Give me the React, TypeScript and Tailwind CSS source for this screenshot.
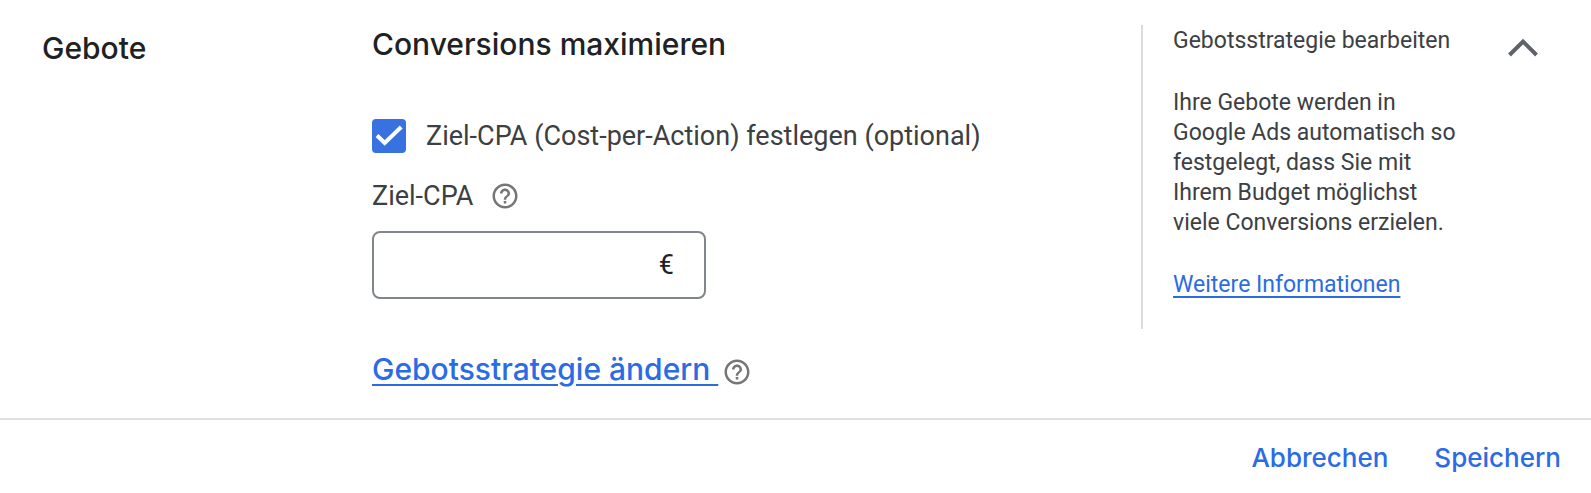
import React, { useState } from 'react';

const HelpIcon: React.FC = () => (
    <svg viewBox="0 0 24 24" className="h-[30px] w-[30px] fill-[#757575]" aria-hidden="true">
        <path d="M11 18h2v-2h-2v2zm1-16C6.48 2 2 6.48 2 12s4.48 10 10 10 10-4.48 10-10S17.52 2 12 2zm0 18c-4.41 0-8-3.59-8-8s3.59-8 8-8 8 3.59 8 8-3.59 8-8 8zm0-14c-2.21 0-4 1.79-4 4h2c0-1.1.9-2 2-2s2 .9 2 2c0 2-3 1.75-3 5h2c0-2.25 3-2.5 3-5 0-2.21-1.79-4-4-4z" />
    </svg>
);

export default function App() {
    const [useTarget, setUseTarget] = useState(true);
    const [targetCpa, setTargetCpa] = useState('');

    return (
        <div className="bg-white font-['Roboto',sans-serif] text-[#3c4043]">
            <section className="flex items-start border-b-2 border-[#e0e0e0] pt-6 pr-[38px] pb-[29px] pl-[42px]">
                <h2 className="w-[330px] shrink-0 pt-1 font-['Inter',sans-serif] text-[30px] leading-[40px] font-medium text-[#202124]">
                    Gebote
                </h2>

                {/* Bid strategy form */}
                <div className="min-w-0 flex-1">
                    <h3 className="font-['Inter',sans-serif] text-[30px] leading-[40px] font-medium text-[#202124]">
                        Conversions maximieren
                    </h3>

                    <div className="mt-[54px] flex items-center gap-5">
                        <span className="relative h-[34px] w-[34px] shrink-0">
                            <input
                                id="use-target"
                                type="checkbox"
                                checked={useTarget}
                                onChange={(e) => setUseTarget(e.target.checked)}
                                className="block h-full w-full appearance-none rounded border-2 border-[#757575] checked:border-[#3871e0] checked:bg-[#3871e0]"
                            />
                            {useTarget && (
                                <svg viewBox="0 0 34 34" className="pointer-events-none absolute inset-0" aria-hidden="true">
                                    <path d="M5 16.5 L12.7 24 L29.2 8" fill="none" stroke="#fff" strokeWidth="4" />
                                </svg>
                            )}
                        </span>
                        <label htmlFor="use-target" className="text-[27px] leading-[36px]">
                            Ziel-CPA (Cost-per-Action) festlegen (optional)
                        </label>
                    </div>

                    <div className="mt-6 flex items-center gap-4">
                        <label htmlFor="target-cpa" className="text-[27px] leading-[36px]">Ziel-CPA</label>
                        <button type="button" aria-label="Hilfe zu Ziel-CPA">
                            <HelpIcon />
                        </button>
                    </div>

                    <div className="mt-[17px] flex h-[68px] w-[334px] items-center rounded-lg border-2 border-[#80868b] pr-[30px] pl-4">
                        <input
                            id="target-cpa"
                            type="text"
                            value={targetCpa}
                            onChange={(e) => setTargetCpa(e.target.value)}
                            className="min-w-0 flex-1 text-[27px] outline-none"
                        />
                        <span className="text-[27px] leading-[36px] text-[#202124]">€</span>
                    </div>

                    <div className="mt-[50px] flex items-end gap-1">
                        <a
                            href="#"
                            className="font-['Inter',sans-serif] text-[30px] leading-[40px] font-medium whitespace-pre text-[#2b6be4] underline decoration-2 underline-offset-4"
                        >
                            {'Gebotsstrategie ändern '}
                        </a>
                        <button type="button" aria-label="Hilfe zur Gebotsstrategie" className="pb-0.5">
                            <HelpIcon />
                        </button>
                    </div>
                </div>

                {/* Side help */}
                <aside className="mt-px flex w-[352px] shrink-0 flex-col gap-8 border-l-2 border-[#dadce0] pt-px pr-8 pb-[29px] pl-[30px] text-[23px] leading-[30px]">
                    <p>Gebotsstrategie bearbeiten</p>
                    <p>Ihre Gebote werden in Google Ads automatisch so festgelegt, dass Sie mit Ihrem Budget möglichst viele Conversions erzielen.</p>
                    <a href="#" className="self-start text-[#2b6be4] underline decoration-2 underline-offset-4">
                        Weitere Informationen
                    </a>
                </aside>
                <button type="button" aria-label="Einklappen" className="-mt-1.5 h-[60px] w-[60px] shrink-0">
                    <svg viewBox="0 0 24 24" className="fill-none stroke-[#5f6368]" aria-hidden="true">
                        <path d="M6.6 14.8 L12 9.4 L17.4 14.8" strokeWidth="1.6" />
                    </svg>
                </button>
            </section>

            <div className="flex justify-end gap-[46px] py-[18px] pr-[30px] font-['Inter',sans-serif] text-[26px] leading-[40px] font-medium text-[#2b6be4]">
                <button type="button">Abbrechen</button>
                <button type="button">Speichern</button>
            </div>
        </div>
    );
}
